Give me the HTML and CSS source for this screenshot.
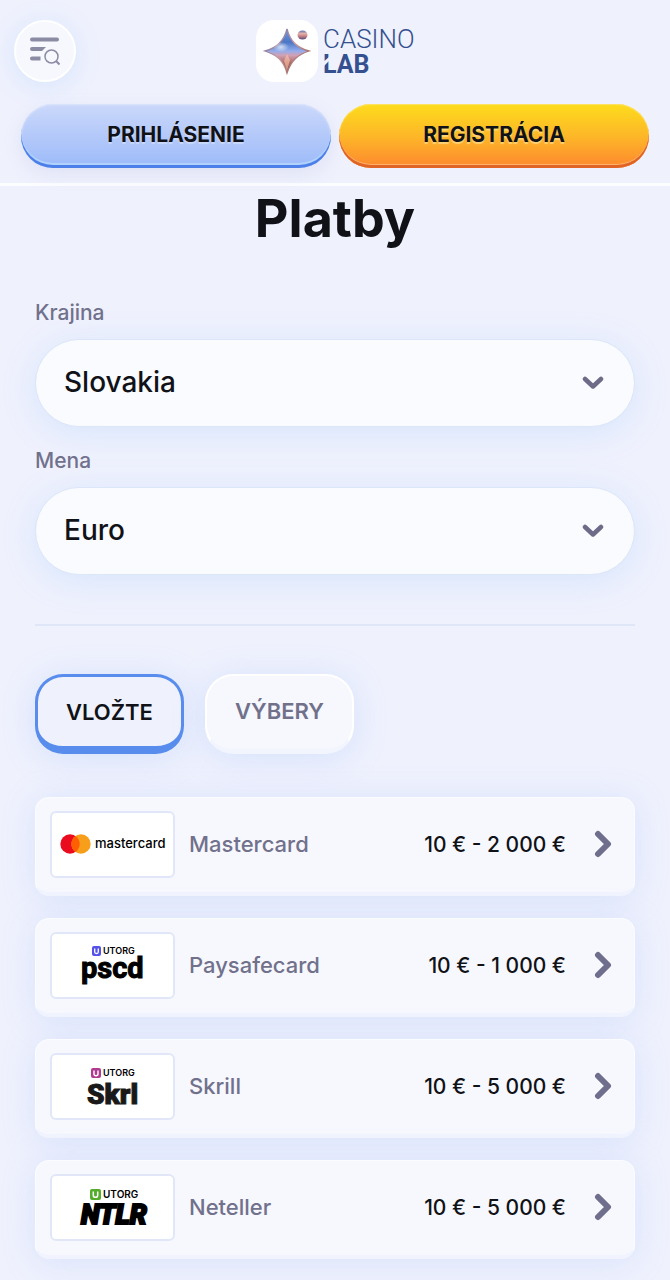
FILE: index.html
```html
<!DOCTYPE html>
<html lang="sk">
<head>
<meta charset="utf-8">
<meta name="viewport" content="width=device-width, initial-scale=1">
<title>Platby</title>
<link rel="stylesheet" href="styles.css">
</head>
<body>
<header class="header">
  <div class="header-top">
    <button class="menu-button" type="button" aria-label="Menu">
      <svg width="32" height="30" viewBox="0 0 32 30" fill="none" stroke="#8b8ba4">
        <path d="M3 3.500H28" stroke-width="4" stroke-linecap="round"/>
        <path d="M3 11H17L13 15H3a2 2 0 0 1 0-4ZM3 20.500H11.500V24.500H3a2 2 0 0 1 0-4Z" fill="#8b8ba4" stroke="none"/>
        <circle cx="22.500" cy="20.500" r="6.500" stroke-width="1.500"/>
        <path d="M27.300 25.300l3.200 3.200" stroke-width="2"/>
      </svg>
    </button>
    <a class="logo" href="#" aria-label="Casino Lab">
      <svg width="160" height="62" viewBox="0 0 160 62">
        <defs>
          <linearGradient id="star" x1="0" y1="0" x2="0" y2="1">
            <stop offset="0" stop-color="#7b9bd8"/>
            <stop offset=".3" stop-color="#4b76c6"/>
            <stop offset=".5" stop-color="#93acec"/>
            <stop offset=".6" stop-color="#d2a0b4"/>
            <stop offset=".78" stop-color="#a9685f"/>
            <stop offset="1" stop-color="#6c3839"/>
          </linearGradient>
          <linearGradient id="edge" x1="0" y1="0" x2="1" y2="1">
            <stop offset="0" stop-color="#5c70a8"/>
            <stop offset=".5" stop-color="#c8989f"/>
            <stop offset="1" stop-color="#8a4d45"/>
          </linearGradient>
          <radialGradient id="shine">
            <stop offset="0" stop-color="#fff" stop-opacity=".7"/>
            <stop offset="1" stop-color="#fff" stop-opacity="0"/>
          </radialGradient>
          <linearGradient id="ball" x1="0" y1="0" x2="0" y2="1">
            <stop offset="0" stop-color="#5971b4"/>
            <stop offset=".35" stop-color="#e6b0a9"/>
            <stop offset=".62" stop-color="#c78384"/>
            <stop offset="1" stop-color="#55477f"/>
          </linearGradient>
        </defs>
        <rect width="62" height="62" rx="18" fill="#fff"/>
        <path d="M31 9C34 21 41 28 53 31C41 35 35 41 31 53C28 41 21 35 9 31C21 28 28 21 31 9Z" fill="url(#star)" stroke="url(#edge)" stroke-width="1.300"/>
        <path d="M31 34L34 40L31 51L28 41Z" fill="#ffc6aa" opacity=".6"/>
        <ellipse cx="25" cy="27" rx="8" ry="5" fill="url(#shine)"/>
        <ellipse cx="46.500" cy="15" rx="5" ry="4.600" fill="url(#ball)"/>
        <text class="logo-light" x="67" y="28">CASINO</text>
        <text class="logo-bold" x="67" y="53">LAB</text>
        <path d="M66 43L73 37V41L66 48Z" fill="#eff2fd"/>
      </svg>
    </a>
  </div>
  <div class="header-actions">
    <button class="action action-login" type="button">PRIHLÁSENIE</button>
    <button class="action action-register" type="button">REGISTRÁCIA</button>
  </div>
</header>
<main class="main">
  <h1 class="title">Platby</h1>
  <form class="filters">
    <div class="field">
      <label class="field-label" for="country">Krajina</label>
      <div class="select-box">
        <select class="select" id="country"><option>Slovakia</option></select>
        <svg class="select-arrow" width="22" height="14" viewBox="0 0 22 14"><path d="M3 3l8 7.500L19 3" fill="none" stroke="#6d6b87" stroke-width="4.500" stroke-linecap="round" stroke-linejoin="round"/></svg>
      </div>
    </div>
    <div class="field">
      <label class="field-label" for="currency">Mena</label>
      <div class="select-box">
        <select class="select" id="currency"><option>Euro</option></select>
        <svg class="select-arrow" width="22" height="14" viewBox="0 0 22 14"><path d="M3 3l8 7.500L19 3" fill="none" stroke="#6d6b87" stroke-width="4.500" stroke-linecap="round" stroke-linejoin="round"/></svg>
      </div>
    </div>
  </form>
  <div class="tabs">
    <button class="tab tab-active" type="button">VLOŽTE</button>
    <button class="tab" type="button">VÝBERY</button>
  </div>
  <ul class="methods">
    <li>
      <button class="method" type="button">
        <span class="brand">
          <svg width="106" height="24" viewBox="0 0 106 24">
            <circle cx="10" cy="12" r="9.700" fill="#eb0b1e"/>
            <circle cx="21" cy="12" r="9.700" fill="#f79e1b"/>
            <path d="M15.500 4a9.700 9.700 0 0 1 0 16a9.700 9.700 0 0 1 0-16Z" fill="#ff5f00"/>
            <text class="mc-text" x="35" y="16">mastercard</text>
          </svg>
        </span>
        <span class="method-name">Mastercard</span>
        <span class="method-range">10 € - 2 000 €</span>
        <svg class="method-arrow" width="18" height="28" viewBox="0 0 18 28"><path d="M4 4l10 10L4 24" fill="none" stroke="#6f6e8c" stroke-width="6" stroke-linecap="round" stroke-linejoin="round"/></svg>
      </button>
    </li>
    <li>
      <button class="method" type="button">
        <span class="brand">
          <svg width="70" height="60" viewBox="0 -8 70 60">
            <rect x="14" y="3" width="9" height="10" rx="2" fill="#5552ea"/>
            <path d="M16.700 5.500V9q0 1.500 1.800 1.500T20.300 9V5.500" fill="none" stroke="#fff" stroke-width="1.300"/>
            <text class="utorg" x="25" y="11">UTORG</text>
            <text class="pscd" x="3" y="35">pscd</text>
          </svg>
        </span>
        <span class="method-name">Paysafecard</span>
        <span class="method-range">10 € - 1 000 €</span>
        <svg class="method-arrow" width="18" height="28" viewBox="0 0 18 28"><path d="M4 4l10 10L4 24" fill="none" stroke="#6f6e8c" stroke-width="6" stroke-linecap="round" stroke-linejoin="round"/></svg>
      </button>
    </li>
    <li>
      <button class="method" type="button">
        <span class="brand">
          <svg width="70" height="60" viewBox="0 -8 70 60">
            <rect x="13" y="4" width="10" height="10" rx="2" fill="#b13a91"/>
            <path d="M16 6.500V10q0 1.700 2 1.700T20 10V6.500" fill="none" stroke="#fff" stroke-width="1.400"/>
            <text class="utorg" x="25" y="12">UTORG</text>
            <text class="skrl" x="9" y="40">Skrl</text>
          </svg>
        </span>
        <span class="method-name">Skrill</span>
        <span class="method-range">10 € - 5 000 €</span>
        <svg class="method-arrow" width="18" height="28" viewBox="0 0 18 28"><path d="M4 4l10 10L4 24" fill="none" stroke="#6f6e8c" stroke-width="6" stroke-linecap="round" stroke-linejoin="round"/></svg>
      </button>
    </li>
    <li>
      <button class="method" type="button">
        <span class="brand">
          <svg width="70" height="60" viewBox="0 -8 70 60">
            <rect x="12" y="4" width="11" height="11" rx="2" fill="#53ad2b"/>
            <path d="M15.300 6.500V10.500q0 1.800 2.200 1.800t2.200-1.800V6.500" fill="none" stroke="#fff" stroke-width="1.500"/>
            <text class="utorg utorg-large" x="25" y="13">UTORG</text>
            <text class="ntlr" x="3" y="39">NTLR</text>
          </svg>
        </span>
        <span class="method-name">Neteller</span>
        <span class="method-range">10 € - 5 000 €</span>
        <svg class="method-arrow" width="18" height="28" viewBox="0 0 18 28"><path d="M4 4l10 10L4 24" fill="none" stroke="#6f6e8c" stroke-width="6" stroke-linecap="round" stroke-linejoin="round"/></svg>
      </button>
    </li>
  </ul>
</main>
</body>
</html>
```
FILE: styles.css
```css
* { box-sizing: border-box; }
body {
  margin: 0;
  background: #eff1fd;
  color: #101217;
  font-family: Inter, "Open Sans", sans-serif;
}
button, select { font-family: inherit; color: inherit; cursor: pointer; }
.header {
  padding: 20px 21px 15px;
  border-bottom: 3px solid #fbfdff;
}
.header-top {
  display: grid;
  grid-template-columns: 1fr auto 1fr;
  align-items: center;
  margin-left: -7px;
  margin-right: -7px;
}
.menu-button {
  display: flex;
  align-items: center;
  justify-content: center;
  width: 62px;
  height: 62px;
  padding: 0;
  border: 2px solid #fff;
  border-radius: 50%;
  background: #f7f8fe;
  box-shadow: 0 4px 24px rgba(150, 200, 250, .28);
}
.logo { display: block; padding-left: 2px; }
.logo svg { display: block; }
.logo-light { font: 300 26px Roboto, sans-serif; fill: #35508f; }
.logo-bold { font: 700 25px Roboto, sans-serif; fill: #35508f; }
.header-actions {
  display: grid;
  grid-template-columns: 1fr 1fr;
  gap: 8px;
  margin-top: 22px;
}
.action {
  height: 64px;
  padding: 0 16px 4px;
  border: 0;
  border-radius: 32px;
  font-size: 21px;
  font-weight: 700;
}
.action-login {
  background: linear-gradient(#cbd8fa, #9cbaf9);
  box-shadow: inset 0 -3px #4c80e8, inset 0 -5px #b1d2fd, inset 0 1px 2px #dce5fc, 0 6px 18px rgba(140, 150, 200, .16);
  text-shadow: 0 2px 1px rgba(255, 255, 255, .35);
}
.action-register {
  background: linear-gradient(#fddc1c, #fdb728 50%, #fd872f);
  box-shadow: inset 0 -3px #df6426, inset 0 -4px #ffb069, inset 0 1px 1px #ffe26a;
  text-shadow: 0 2px 1px rgba(255, 235, 170, .6);
}
.main { padding: 0 35px 21px; }
.title {
  margin: 0;
  padding: 3px 0;
  font-size: 52px;
  line-height: 60px;
  font-weight: 700;
  text-align: center;
}
.filters {
  display: grid;
  gap: 20px;
  margin-top: 47px;
  padding-bottom: 49px;
  border-bottom: 2px solid #dfe6f8;
}
.field-label {
  display: block;
  margin-bottom: 12px;
  color: #71718c;
  font-size: 21px;
  line-height: 28px;
  font-weight: 500;
}
.select-box { position: relative; }
.select {
  display: block;
  width: 100%;
  height: 88px;
  padding: 0 64px 2px 28px;
  appearance: none;
  border: 1px solid #dbe6f9;
  border-radius: 44px;
  background: #fafbff;
  box-shadow: 0 6px 32px rgba(160, 205, 252, .3);
  font-size: 28px;
  font-weight: 500;
}
.select-arrow {
  position: absolute;
  top: 37px;
  right: 31px;
  pointer-events: none;
}
.tabs {
  display: flex;
  gap: 21px;
  margin-top: 48px;
}
.tab {
  height: 80px;
  padding: 0 28px 3px;
  border: 2px solid #fff;
  border-bottom: 5px solid #f2f5fe;
  border-radius: 28px;
  background: #f7f8fe;
  box-shadow: 0 4px 32px rgba(160, 195, 248, .32);
  color: #71718c;
  font-size: 22px;
  font-weight: 600;
}
.tab-active {
  padding: 0 28px;
  border: 3px solid #588ced;
  border-bottom-width: 8px;
  background: #eff2fd;
  color: #101217;
}
.methods {
  display: grid;
  gap: 22px;
  margin: 43px 0 0;
  padding: 0;
  list-style: none;
}
.method {
  display: flex;
  align-items: center;
  width: 100%;
  height: 99px;
  padding: 0 22px 2px 14px;
  border: 1px solid #fbfcff;
  border-bottom: 4px solid #f1f4fe;
  border-radius: 14px;
  background: #f7f8fe;
  box-shadow: 0 3px 32px rgba(165, 195, 250, .3);
  font-size: 22px;
  font-weight: 500;
  text-align: left;
}
.brand {
  display: flex;
  align-items: center;
  justify-content: center;
  flex: none;
  width: 125px;
  height: 67px;
  border: 2px solid #e1e7f8;
  border-radius: 6px;
  background: #fff;
}
.method-name {
  flex: 1;
  margin-left: 14px;
  color: #71718c;
}
.method-range { font-size: 21px; white-space: nowrap; }
.method-arrow { flex: none; margin-left: 28px; }
.mc-text { font: 500 13px Inter, sans-serif; }
.utorg { font: 600 9px Inter, sans-serif; }
.utorg-large { font-size: 10px; }
.pscd { font: 700 29px Roboto, sans-serif; stroke: #000; }
.skrl { font: 900 28px Roboto, sans-serif; fill: #191919; stroke: #191919; }
.ntlr { font: italic 900 27px Roboto, sans-serif; stroke: #000; stroke-width: 2px; }
```
